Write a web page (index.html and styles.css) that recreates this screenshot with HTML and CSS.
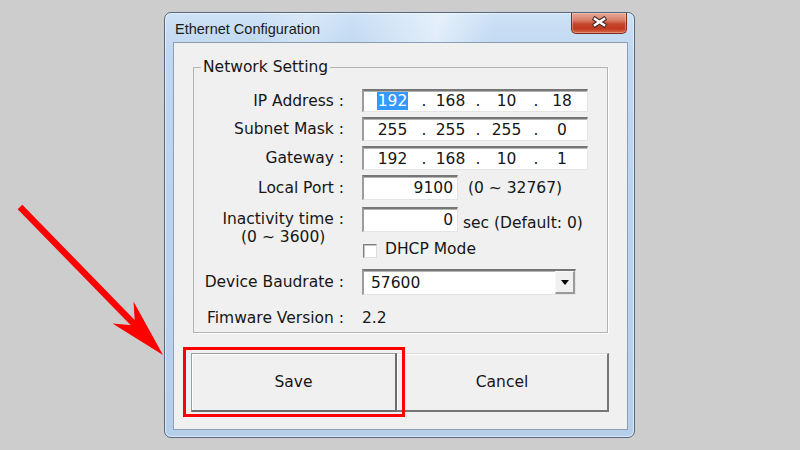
FILE: index.html
```html
<!DOCTYPE html>
<html>
<head>
<meta charset="utf-8">
<title>Ethernet Configuration</title>
<link rel="stylesheet" href="styles.css">
</head>
<body>
<div class="stage">
  <div class="window">
    <div class="titlebar">
      <span class="title">Ethernet Configuration</span>
      <div class="close">
        <svg width="56" height="21" viewBox="0 0 56 21">
          <path d="M24 7 L33 13 M33 7 L24 13" stroke="#4a2a24" stroke-width="4.6" stroke-linecap="square" fill="none"/>
          <path d="M24 7 L33 13 M33 7 L24 13" stroke="#ffffff" stroke-width="2.6" stroke-linecap="square" fill="none"/>
        </svg>
      </div>
    </div>
    <div class="frame">
      <div class="client">
        <fieldset class="group">
          <legend>Network Setting</legend>
          <div class="form">
            <div class="lbl">IP Address :</div>
            <div class="field ip"><span><span class="sel">192</span></span><span>.</span><span>168</span><span>.</span><span>10</span><span>.</span><span>18</span></div>

            <div class="lbl">Subnet Mask :</div>
            <div class="field ip"><span>255</span><span>.</span><span>255</span><span>.</span><span>255</span><span>.</span><span>0</span></div>

            <div class="lbl">Gateway :</div>
            <div class="field ip"><span>192</span><span>.</span><span>168</span><span>.</span><span>10</span><span>.</span><span>1</span></div>

            <div class="lbl">Local Port :</div>
            <div class="ctl">
              <div class="field num">9100</div>
              <span class="note port-note">(0 ~ 32767)</span>
            </div>

            <div class="lbl multi">Inactivity time :<br>(0 ~ 3600)</div>
            <div class="ctl ctl-end">
              <div class="field num">0</div>
              <span class="note sec-note">sec (Default: 0)</span>
            </div>

            <div class="chk-row">
              <span class="chk"></span>
              <span class="note chk-text">DHCP Mode</span>
            </div>

            <div class="lbl">Device Baudrate :</div>
            <div class="combo">
              <span class="combo-text">57600</span>
              <span class="drop"><svg width="8" height="5" viewBox="0 0 8 5"><path d="M0 0 H8 L4 5 Z" fill="#000"/></svg></span>
            </div>

            <div class="lbl last">Fimware Version :</div>
            <div class="value last">2.2</div>
          </div>
        </fieldset>
        <div class="buttons">
          <button class="btn btn-save">Save</button>
          <button class="btn btn-cancel">Cancel</button>
          <div class="mark"></div>
        </div>
      </div>
    </div>
  </div>
  <svg class="arrow" width="800" height="450" viewBox="0 0 800 450">
    <line x1="20" y1="207" x2="136" y2="326" stroke="#ff0000" stroke-width="6.5"/>
    <polygon points="163,355 112.5,323.5 135,325.5 133.5,301.5" fill="#ff0000"/>
  </svg>
</div>
</body>
</html>
```

FILE: styles.css
```css
* {
  box-sizing: border-box;
}

html,
body {
  margin: 0;
  padding: 0;
}

body {
  background: #cdcdcd;
  font-family: "DejaVu Sans", Verdana, sans-serif;
  color: #161616;
}

.stage {
  position: relative;
  width: 800px;
  height: 450px;
  padding: 12px 0 0 164px;
  overflow: hidden;
}

/* ---------- window frame ---------- */
.window {
  width: 471px;
  height: 426px;
  border: 1px solid #55677e;
  border-radius: 7px;
  background: linear-gradient(180deg, #cde1f6 0px, #bfd7f0 40px, #b5cfeb 100%);
  box-shadow: inset 0 0 0 1px rgba(255, 255, 255, 0.55);
  display: flex;
  flex-direction: column;
}

.titlebar {
  height: 29px;
  display: flex;
  justify-content: space-between;
  align-items: flex-start;
  padding: 0 7px 0 10px;
  border-radius: 6px 6px 0 0;
  background: linear-gradient(100deg,
      rgba(255, 255, 255, 0) 20%,
      rgba(255, 255, 255, 0.25) 30%,
      rgba(255, 255, 255, 0) 40%,
      rgba(255, 255, 255, 0.5) 58%,
      rgba(255, 255, 255, 0) 70%);
}

.title {
  font-family: "Liberation Sans", Arial, sans-serif;
  font-size: 14.5px;
  line-height: 20px;
  margin-top: 6px;
  color: #1b1b1b;
}

.close {
  width: 56px;
  height: 21px;
  border: 1px solid #7f2b1d;
  border-top: none;
  border-radius: 0 0 5px 5px;
  background: linear-gradient(180deg, #e8ab99 0%, #d9806a 35%, #c5472c 55%, #c0391f 78%, #d8684a 100%);
  box-shadow: inset 0 0 0 1px rgba(255, 220, 210, 0.35);
}

.close svg {
  display: block;
  margin: -1px 0 0 -1px;
}

.frame {
  flex: 1;
  display: flex;
  padding: 0 6px 7px 8px;
}

.client {
  flex: 1;
  border: 1px solid #8d9fb5;
  background: #f0f0f0;
  padding-top: 15px;
}

/* ---------- group box ---------- */
.group {
  margin: 0 19px;
  padding: 0 6px;
  border: 1px solid #b4b4b4;
  box-shadow: 1px 1px 0 #fdfdfd;
  min-width: 0;
}

.group legend {
  font-size: 15.5px;
  line-height: 18px;
  padding: 0 2px;
  margin-left: 1px;
  color: #161616;
}

.form {
  margin-top: 13px;
  display: grid;
  grid-template-columns: 144px 1fr;
  grid-template-rows: 23px 24px 24px 25px 27px 27px 26px 32px;
  column-gap: 18px;
  row-gap: 5px;
  font-size: 15.5px;
  line-height: 18px;
}

.lbl {
  text-align: right;
  align-self: center;
  white-space: nowrap;
}

.lbl.multi {
  grid-row: span 2;
  align-self: start;
  justify-self: end;
  text-align: center;
  margin-top: 5px;
}

.last {
  padding-top: 4px;
}

/* ---------- edit fields ---------- */
.field {
  background: #ffffff;
  border-style: solid;
  border-width: 2px 1px 1px 2px;
  border-color: #767676 #e4e4e4 #e4e4e4 #9c9c9c;
  box-shadow: inset 0 1px 0 #b4b4b4;
}

.ip {
  width: 226px;
  display: grid;
  grid-template-columns: 55px 8px 45px 10px 47px 12px 40px;
  align-items: center;
  text-align: center;
  padding-left: 1px;
}

.sel {
  display: inline-block;
  background: #3399ff;
  color: #ffffff;
  padding: 0 1px;
  line-height: 18px;
}

.ctl {
  display: flex;
  align-items: center;
}

.ctl-end {
  align-items: flex-end;
}

.num {
  width: 96px;
  height: 25px;
  display: flex;
  align-items: center;
  justify-content: flex-end;
  padding-right: 4px;
}

.note {
  white-space: nowrap;
}

.port-note {
  margin-left: 10px;
}

.sec-note {
  margin-left: 5px;
}

.chk-row {
  grid-column: 2;
  display: flex;
  align-items: center;
  gap: 8px;
  padding-left: 1px;
}

.chk {
  width: 14px;
  height: 14px;
  background: #ffffff;
  border: 1px solid;
  border-color: #7e7e7e #dedede #dedede #7e7e7e;
  box-shadow: inset 1px 1px 0 #c4c4c4;
}

.chk-text {
  margin-bottom: 4px;
}

/* ---------- combo box ---------- */
.combo {
  width: 214px;
  display: flex;
  align-items: stretch;
  background: #ffffff;
  border-style: solid;
  border-width: 2px 1px 1px 2px;
  border-color: #767676 #e4e4e4 #e4e4e4 #9c9c9c;
  box-shadow: inset 0 1px 0 #b4b4b4;
}

.combo-text {
  flex: 1;
  padding-left: 7px;
  align-self: center;
}

.drop {
  width: 20px;
  display: flex;
  align-items: center;
  justify-content: center;
  background: #f0f0f0;
  border-style: solid;
  border-width: 1px 2px 2px 1px;
  border-color: #f8f8f8 #9a9a9a #9a9a9a #f8f8f8;
}

.value {
  align-self: center;
}

/* ---------- buttons ---------- */
.buttons {
  position: relative;
  display: flex;
  margin: 20px 0 0 17px;
}

.btn {
  height: 59px;
  margin: 0;
  font-family: "DejaVu Sans", Verdana, sans-serif;
  font-size: 15.5px;
  color: #161616;
  background: #f0f0f0;
  border-style: solid;
  border-width: 1px 2px 2px 1px;
  border-color: #dcdcdc #777777 #777777 #dcdcdc;
  box-shadow: inset 1px 1px 0 #ffffff;
  padding: 0;
}

.btn-save {
  width: 206px;
  border-color: #9d9d9d #6c6c6c #6c6c6c #9d9d9d;
}

.btn-cancel {
  width: 212px;
  border-left-width: 0;
}

.mark {
  position: absolute;
  left: -8px;
  top: -6px;
  width: 222px;
  height: 70px;
  border: 3px solid #ff0000;
  pointer-events: none;
}

/* ---------- annotation arrow ---------- */
.arrow {
  position: absolute;
  left: 0;
  top: 0;
  pointer-events: none;
}
```
